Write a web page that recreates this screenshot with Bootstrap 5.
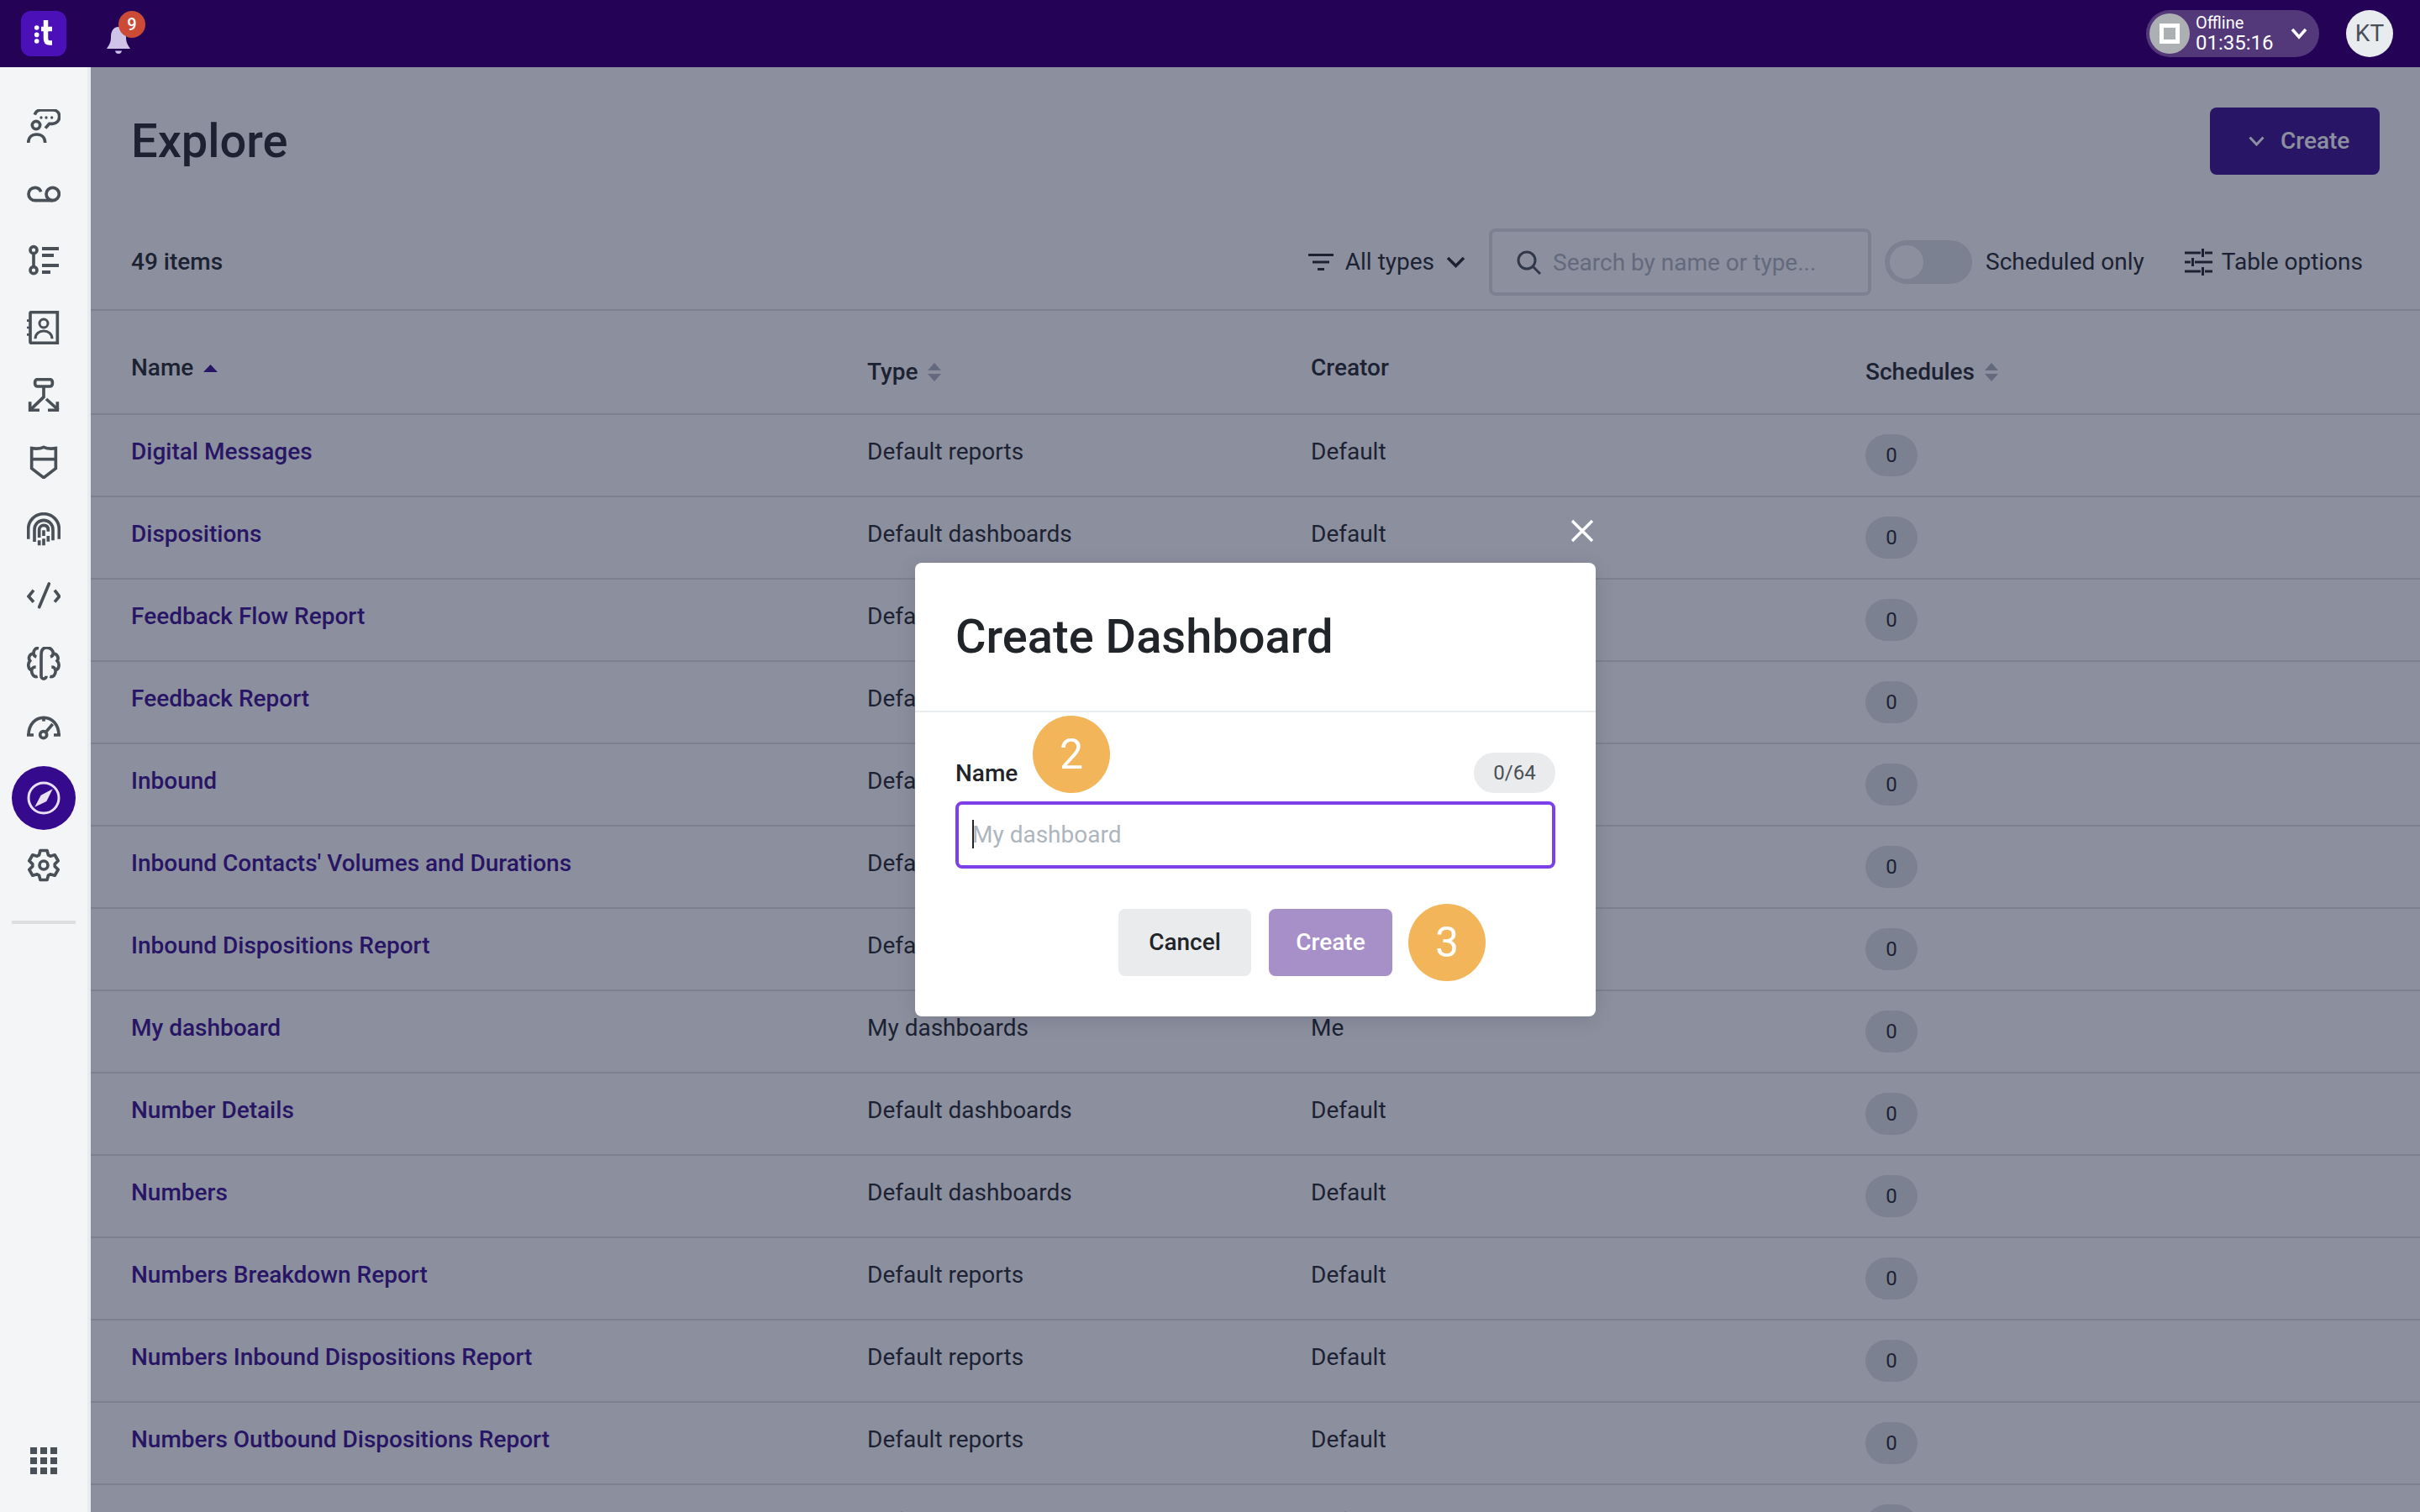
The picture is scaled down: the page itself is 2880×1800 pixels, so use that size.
<!DOCTYPE html>
<html lang="en">
<head>
<meta charset="utf-8">
<title>Explore</title>
<link href="https://cdn.jsdelivr.net/npm/bootstrap@5.3.0/dist/css/bootstrap.min.css" rel="stylesheet">
<style>
html,body{height:1800px;overflow:hidden}
body{font-family:Roboto,"Liberation Sans",sans-serif;font-size:28px;line-height:1.5;color:#212529}
.top-strip{height:80px;background:#240357;padding-left:25px;padding-right:32px;flex:none}
.brand-tile{width:54px;height:54px;border-radius:12px;background:#4b10b8;display:block}
.bell-wrap{position:relative;width:28px;height:32px;margin-left:48px;margin-top:2px}
.bell-count{position:absolute;left:14px;top:-12px;width:32px;height:32px;border-radius:50%;background:#cc4b37;color:#fff;font-size:20px;font-weight:500;line-height:32px;text-align:center}
.status-pill{width:206px;height:56px;border-radius:28px;background:#53387a;padding:0 14px 0 4px;color:#fff}
.status-dot{width:48px;height:48px;border-radius:50%;background:#adb0b3}
.status-square{width:24px;height:24px;border:5px solid #fff}
.status-text{margin-left:7px;line-height:1;margin-top:-1px}
.status-text .st-a{font-size:20px;line-height:22px}
.status-text .st-b{font-size:24px;line-height:26px}
.user-disc{width:56px;height:56px;border-radius:50%;background:#e9ecef;color:#495057;margin-left:32px;line-height:56px;text-align:center}
.side-rail{width:108px;background:#f3f5f7;border-right:4px solid #e9ecef;padding-top:30px;flex:none}
.rail-item{height:80px}
.rail-item svg{width:40px;height:40px;fill:none;stroke:#495057;stroke-width:11}
.rail-item svg .solid{fill:#495057;stroke:none}
.rail-active{width:76px;height:76px;border-radius:50%;background:#360a8c}
.rail-active svg{stroke:#e8e0f5}
.rail-rule{height:4px;width:76px;background:#dcdee0;margin:26px 14px 0}
.rail-grid{width:32px;height:32px;margin:auto 0 45px 36px;display:block;fill:#495057}
.work-area{position:relative;overflow:hidden;background:#fff}
.page-head{padding:48px 48px 0;height:192px;align-items:flex-start}
.page-title{font-size:56px;font-weight:500;line-height:80px;margin:0}
.primary-cta{height:80px;width:202px;background:#360a8c;border:0;border-radius:8px;color:#fff;font-size:28px;font-weight:500;padding:0 0 0 46px;gap:19px}
.tool-row{height:98px;border-bottom:2px solid #dee2e6;padding:0 68px 16px 48px}
.tool-count{font-weight:500}
.tool-filter{gap:14px;color:#212529}
.tool-search{width:455px;height:80px;border:4px solid #dee2e6;border-radius:8px;margin-left:28px;padding-left:29px;gap:14px;color:#adb5bd}
.tool-search span{padding-top:1px}
.tool-switch{width:104px;height:52px;border-radius:26px;background:#dee2e6;margin-left:16px;padding:6px}
.tool-thumb{width:40px;height:40px;border-radius:50%;background:#fff;display:block}
.tool-label{margin-left:16px}
.tool-options{margin-left:48px;gap:11px}
.explore-grid{table-layout:fixed;width:2772px;margin:0}
.explore-grid .c1{width:924px}.explore-grid .c2{width:528px}.explore-grid .c3{width:660px}
.explore-grid>thead>tr>th{height:123px;padding:47px 0 0;border-bottom:2px solid #dee2e6;font-weight:500;vertical-align:top;color:#212529}
.explore-grid>tbody>tr>td{height:98px;padding:23px 0 0;border-bottom:2px solid #dee2e6;vertical-align:top;color:#212529}
.explore-grid>thead>tr>th:first-child,.explore-grid>tbody>tr>td:first-child{padding-left:48px}
.explore-grid>thead>tr>th.low-head{padding-top:52px}
.head-inner{gap:12px}
.sort-set{display:block;width:16px;height:22px;fill:#adb5bd}
.row-link{color:#360a8c;font-weight:500;text-decoration:none}
.count-chip{width:62px;height:50px;background:#dee2e6;color:#212529;font-size:24px;font-weight:400;line-height:50px;padding:0;border-radius:25px;display:block}
.scrim{position:absolute;inset:0;background:rgba(25,31,61,.5);z-index:5}
.dialog-box{width:810px;height:540px;border:0;border-radius:8px;background:#fff;box-shadow:0 4px 24px rgba(0,0,0,.12)}
.dialog-head{height:178px;padding:0 48px 0;border-bottom:2px solid #e9ecef;border-radius:0}
.dialog-title{font-size:56px;font-weight:500;line-height:1.2;margin:0;color:#212529;padding-top:2px}
.dialog-body{padding:48px 48px 0}
.dialog-label{font-weight:500;margin:0;padding-top:2px}
.char-pill{width:97px;height:48px;border-radius:24px;background:#e9ebed;color:#495057;font-size:24px;line-height:48px;text-align:center}
.name-wrap{position:relative;margin-top:10px}
.name-input.form-control{height:80px;border:4px solid #7c3fe8;border-radius:8px;box-shadow:none;font-size:28px;padding:0 16px 2px;color:#212529}
.name-input.form-control::placeholder{color:#adb5bd;opacity:1}
.fake-caret{position:absolute;left:20px;top:22px;width:2px;height:34px;background:#212529}
.dialog-actions{margin-top:48px;gap:21px}
.btn-soft{height:80px;width:158px;background:#e9ebed;border:0;border-radius:8px;color:#212529;font-size:28px;font-weight:500;padding:0}
.btn-muted{height:80px;width:147px;background:#a78fc8;border:0;border-radius:8px;color:#fff;font-size:28px;font-weight:500;padding:0}
.btn-muted:disabled{background:#a78fc8;color:#fff;opacity:1}
.dialog-close{position:absolute;right:2px;top:-54px;width:28px;height:28px;background:none;border:0;padding:0;display:block;margin-top:-7px}
.step-disc{position:absolute;width:92px;height:92px;border-radius:50%;background:#f2b55a;color:#fff;font-size:50px;line-height:92px;text-align:center}
.step-two{left:140px;top:182px}
.step-three{left:587px;top:406px}
</style>
</head>
<body class="d-flex flex-column">
<header class="top-strip d-flex align-items-center">
  <svg class="brand-tile" viewBox="0 0 54 54" aria-label="Logo"><rect width="54" height="54" rx="12" fill="#4b10b8"/><g fill="#fff"><circle cx="18.7" cy="20" r="2.8"/><circle cx="18.7" cy="28.4" r="2.8"/><circle cx="18.7" cy="36" r="2.8"/></g><path d="M29.5 11V33Q29.5 38 34 38H37M24 21.5H37" fill="none" stroke="#fff" stroke-width="5.5"/></svg>
  <div class="bell-wrap">
    <svg width="28" height="32" viewBox="0 0 28 32"><path d="M14 0C7.5 0 5 6 5 12C5 19 3 21 0 26H28C25 21 23 19 23 12C23 6 20.500 0 14 0Z" fill="#cfc3e8"/><path d="M10 28.500H18C17.500 31 16 32 14 32S10.500 31 10 28.500Z" fill="#cfc3e8"/></svg>
    <span class="bell-count">9</span>
  </div>
  <div class="status-pill d-flex align-items-center ms-auto">
    <span class="status-dot d-flex align-items-center justify-content-center"><span class="status-square"></span></span>
    <div class="status-text"><div class="st-a">Offline</div><div class="st-b">01:35:16</div></div>
    <svg class="ms-auto" width="20" height="14" viewBox="0 0 20 14"><path d="M2 2L10 11L18 2" fill="none" stroke="#fff" stroke-width="3.500"/></svg>
  </div>
  <div class="user-disc">KT</div>
</header>
<div class="d-flex flex-grow-1" style="min-height:0">
  <nav class="side-rail d-flex flex-column">
    <div class="rail-item d-flex align-items-center justify-content-center"><svg viewBox="0 0 120 120"><path d="M28 20C32 8 40 3 50 3H92C108 3 116 14 116 26C116 42 104 52 92 52H80L66 68"/><circle cx="33" cy="57" r="14"/><path d="M5 120C5 100 18 90 35 90C52 90 65 100 65 120"/><circle class="solid" cx="51" cy="30" r="5"/><circle class="solid" cx="69" cy="30" r="5"/><circle class="solid" cx="89" cy="30" r="5"/></svg></div>
    <div class="rail-item d-flex align-items-center justify-content-center"><svg viewBox="0 0 120 120"><g transform="translate(0 3)"><path d="M50 52C46 40 38 37 29 37C16 37 6 47 6 60C6 73 16 83 29 83H92"/><circle cx="92" cy="60" r="23"/></g></svg></div>
    <div class="rail-item d-flex align-items-center justify-content-center"><svg viewBox="0 0 120 120"><circle cx="24" cy="23" r="12"/><circle cx="24" cy="95" r="12"/><path d="M24 35V83"/><path d="M54 18H114M54 42H96M54 78H114M54 102H84" stroke-width="12"/></svg></div>
    <div class="rail-item d-flex align-items-center justify-content-center"><svg viewBox="0 0 120 120"><path d="M16 5H109V115H16Q12 115 12 111V9Q12 5 16 5Z"/><path d="M0 35H14M0 60H14M0 85H14" stroke-width="8"/><circle cx="60" cy="45" r="15" stroke-width="9"/><path d="M30 100C30 82 44 72 60 72C76 72 90 82 90 100" stroke-width="9"/></svg></div>
    <div class="rail-item d-flex align-items-center justify-content-center"><svg viewBox="0 0 120 120"><rect x="29" y="5" width="62" height="25" rx="9"/><path d="M60 30V68L14 112"/><path d="M69 75L112 114"/><path d="M11 85V115H45M109 85V115H75"/></svg></div>
    <div class="rail-item d-flex align-items-center justify-content-center"><svg viewBox="0 0 120 120"><g transform="translate(0 3)"><path d="M17 8Q42 12 60 4Q78 12 103 8V80L60 113L17 80Z"/><path d="M17 47H103"/></g></svg></div>
    <div class="rail-item d-flex align-items-center justify-content-center"><svg viewBox="0 0 120 120"><path d="M5 95V60C5 28 30 5 60 5C90 5 115 28 115 60V95"/><path d="M27 105V62C27 42 42 28 60 28C78 28 93 42 93 62V100"/><path d="M44 90V62C44 52 52 46 60 46C70 46 76 52 76 62V68"/><path d="M44 100V118M60 64V84M60 94V118M76 84V104"/></svg></div>
    <div class="rail-item d-flex align-items-center justify-content-center"><svg viewBox="0 0 120 120"><path d="M24 38L6 60L24 80M99 38L116 60L99 80"/><path d="M79 15L44 98" stroke-linecap="round"/></svg></div>
    <div class="rail-item d-flex align-items-center justify-content-center"><svg viewBox="0 0 120 120"><path d="M42 5C30 3 24 12 24 24C10 24 3 40 11 50C2 60 4 80 17 84C16 98 26 110 38 106M24 24C24 30 28 34 34 36M17 84C18 76 24 72 32 72"/><path d="M51 30C51 10 60 3 70 3C86 3 94 14 94 24C108 24 116 40 108 50C118 60 116 80 102 84C104 98 94 110 82 106M94 24C94 30 90 34 84 36M102 84C101 76 96 72 88 72"/><path d="M51 30V104C51 118 69 118 69 104"/></svg></div>
    <div class="rail-item d-flex align-items-center justify-content-center"><svg viewBox="0 0 120 120"><g transform="translate(0 -12)"><path d="M6 87C6 50 30 25 60 25C90 25 114 50 114 87"/><path d="M60 22V38"/><path d="M0 87H24M96 87H120"/><circle cx="59" cy="86" r="12"/><path d="M68 76L92 48"/></g></svg></div>
    <div class="rail-item d-flex align-items-center justify-content-center"><span class="rail-active d-flex align-items-center justify-content-center"><svg viewBox="0 0 120 120"><circle cx="60" cy="60" r="54" stroke-width="9"/><path d="M92 28L70 72L28 92L50 50Z" fill="#e8e0f5" stroke="none"/></svg></span></div>
    <div class="rail-item d-flex align-items-center justify-content-center"><svg viewBox="0 0 120 120" stroke-linejoin="round"><path d="M43.700 23.500L47.900 7.400H72.100L76.300 23.500L83.500 27.600L99.500 23.200L111.600 44.200L99.800 55.800V64.200L111.600 75.800L99.500 96.800L83.500 92.400L76.300 96.500L72.100 112.600H47.900L43.700 96.500L36.500 92.400L20.500 96.800L8.400 75.800L20.200 64.200V55.800L8.400 44.200L20.500 23.200L36.500 27.600Z"/><circle cx="60" cy="60" r="15"/></svg></div>
    <div class="rail-rule"></div>
    <svg class="rail-grid" viewBox="0 0 32 32"><rect width="8" height="8"/><rect x="12" width="8" height="8"/><rect x="24" width="8" height="8"/><rect y="12" width="8" height="8"/><rect x="12" y="12" width="8" height="8"/><rect x="24" y="12" width="8" height="8"/><rect y="24" width="8" height="8"/><rect x="12" y="24" width="8" height="8"/><rect x="24" y="24" width="8" height="8"/></svg>
  </nav>
  <main class="work-area flex-grow-1">
    <div class="page-head d-flex justify-content-between">
      <h1 class="page-title">Explore</h1>
      <button class="btn primary-cta d-flex align-items-center" type="button"><svg width="19" height="12" viewBox="0 0 19 12"><path d="M1.500 1.500L9.500 10L17.500 1.500" fill="none" stroke="#fff" stroke-width="3"/></svg>Create</button>
    </div>
    <div class="tool-row d-flex align-items-center">
      <span class="tool-count">49 items</span>
      <div class="tool-filter d-flex align-items-center ms-auto">
        <svg width="30" height="20" viewBox="0 0 30 20"><path d="M0 1.500H30M5 10H25M11 18.500H19" fill="none" stroke="#212529" stroke-width="3"/></svg>
        <span>All types</span>
        <svg width="23" height="14" viewBox="0 0 23 14"><path d="M2 2L11.500 11.500L21 2" fill="none" stroke="#212529" stroke-width="3.500"/></svg>
      </div>
      <div class="tool-search d-flex align-items-center">
        <svg width="29" height="29" viewBox="0 0 29 29"><circle cx="12" cy="12" r="10" fill="none" stroke="#495057" stroke-width="3"/><path d="M19 19L28 28" stroke="#495057" stroke-width="3"/></svg>
        <span>Search by name or type...</span>
      </div>
      <span class="tool-switch"><span class="tool-thumb"></span></span>
      <span class="tool-label">Scheduled only</span>
      <div class="tool-options d-flex align-items-center">
        <svg width="33" height="32" viewBox="0 0 33 32"><path d="M0 5H19M24 5H33M21.500 0V10M0 16H7M12 16H33M9.500 11V21M0 27H19M24 27H33M21.500 22V32" fill="none" stroke="#212529" stroke-width="3"/></svg>
        <span>Table options</span>
      </div>
    </div>
    <table class="table explore-grid">
      <colgroup><col class="c1"><col class="c2"><col class="c3"><col></colgroup>
      <thead><tr>
        <th><span class="head-inner d-inline-flex align-items-center">Name <svg width="17" height="9" viewBox="0 0 17 9"><path d="M8.500 0L17 9H0Z" fill="#360a8c"/></svg></span></th>
        <th class="low-head"><span class="head-inner d-inline-flex align-items-center">Type <svg class="sort-set" viewBox="0 0 16 22"><path d="M8 0L16 9H0ZM8 22L0 13H16Z"/></svg></span></th>
        <th>Creator</th>
        <th class="low-head"><span class="head-inner d-inline-flex align-items-center">Schedules <svg class="sort-set" viewBox="0 0 16 22"><path d="M8 0L16 9H0ZM8 22L0 13H16Z"/></svg></span></th>
      </tr></thead>
      <tbody>
        <tr><td><a class="row-link" href="#">Digital Messages</a></td><td>Default reports</td><td>Default</td><td><span class="badge count-chip">0</span></td></tr>
        <tr><td><a class="row-link" href="#">Dispositions</a></td><td>Default dashboards</td><td>Default</td><td><span class="badge count-chip">0</span></td></tr>
        <tr><td><a class="row-link" href="#">Feedback Flow Report</a></td><td>Default reports</td><td>Default</td><td><span class="badge count-chip">0</span></td></tr>
        <tr><td><a class="row-link" href="#">Feedback Report</a></td><td>Default reports</td><td>Default</td><td><span class="badge count-chip">0</span></td></tr>
        <tr><td><a class="row-link" href="#">Inbound</a></td><td>Default dashboards</td><td>Default</td><td><span class="badge count-chip">0</span></td></tr>
        <tr><td><a class="row-link" href="#">Inbound Contacts' Volumes and Durations</a></td><td>Default reports</td><td>Default</td><td><span class="badge count-chip">0</span></td></tr>
        <tr><td><a class="row-link" href="#">Inbound Dispositions Report</a></td><td>Default reports</td><td>Default</td><td><span class="badge count-chip">0</span></td></tr>
        <tr><td><a class="row-link" href="#">My dashboard</a></td><td>My dashboards</td><td>Me</td><td><span class="badge count-chip">0</span></td></tr>
        <tr><td><a class="row-link" href="#">Number Details</a></td><td>Default dashboards</td><td>Default</td><td><span class="badge count-chip">0</span></td></tr>
        <tr><td><a class="row-link" href="#">Numbers</a></td><td>Default dashboards</td><td>Default</td><td><span class="badge count-chip">0</span></td></tr>
        <tr><td><a class="row-link" href="#">Numbers Breakdown Report</a></td><td>Default reports</td><td>Default</td><td><span class="badge count-chip">0</span></td></tr>
        <tr><td><a class="row-link" href="#">Numbers Inbound Dispositions Report</a></td><td>Default reports</td><td>Default</td><td><span class="badge count-chip">0</span></td></tr>
        <tr><td><a class="row-link" href="#">Numbers Outbound Dispositions Report</a></td><td>Default reports</td><td>Default</td><td><span class="badge count-chip">0</span></td></tr>
        <tr><td><a class="row-link" href="#">Outbound</a></td><td>Default dashboards</td><td>Default</td><td><span class="badge count-chip">0</span></td></tr>
      </tbody>
    </table>
    <div class="scrim d-flex align-items-center justify-content-center">
      <div class="modal-content dialog-box">
        <button class="dialog-close" type="button" aria-label="Close"><svg width="28" height="28" viewBox="0 0 28 28"><path d="M2 2L26 26M26 2L2 26" stroke="#fff" stroke-width="3.500"/></svg></button>
        <div class="modal-header dialog-head">
          <h2 class="modal-title dialog-title">Create Dashboard</h2>
        </div>
        <div class="modal-body dialog-body">
          <div class="d-flex justify-content-between align-items-center">
            <label class="dialog-label" for="dash-name">Name</label>
            <span class="char-pill">0/64</span>
          </div>
          <div class="name-wrap">
            <input id="dash-name" class="form-control name-input" type="text" placeholder="My dashboard">
            <span class="fake-caret"></span>
          </div>
          <div class="dialog-actions d-flex justify-content-center">
            <button class="btn btn-soft" type="button">Cancel</button>
            <button class="btn btn-muted" type="button" disabled>Create</button>
          </div>
        </div>
        <span class="step-disc step-two">2</span>
        <span class="step-disc step-three">3</span>
      </div>
    </div>
  </main>
</div>
<script src="https://cdn.jsdelivr.net/npm/bootstrap@5.3.0/dist/js/bootstrap.bundle.min.js"></script>
</body>
</html>
